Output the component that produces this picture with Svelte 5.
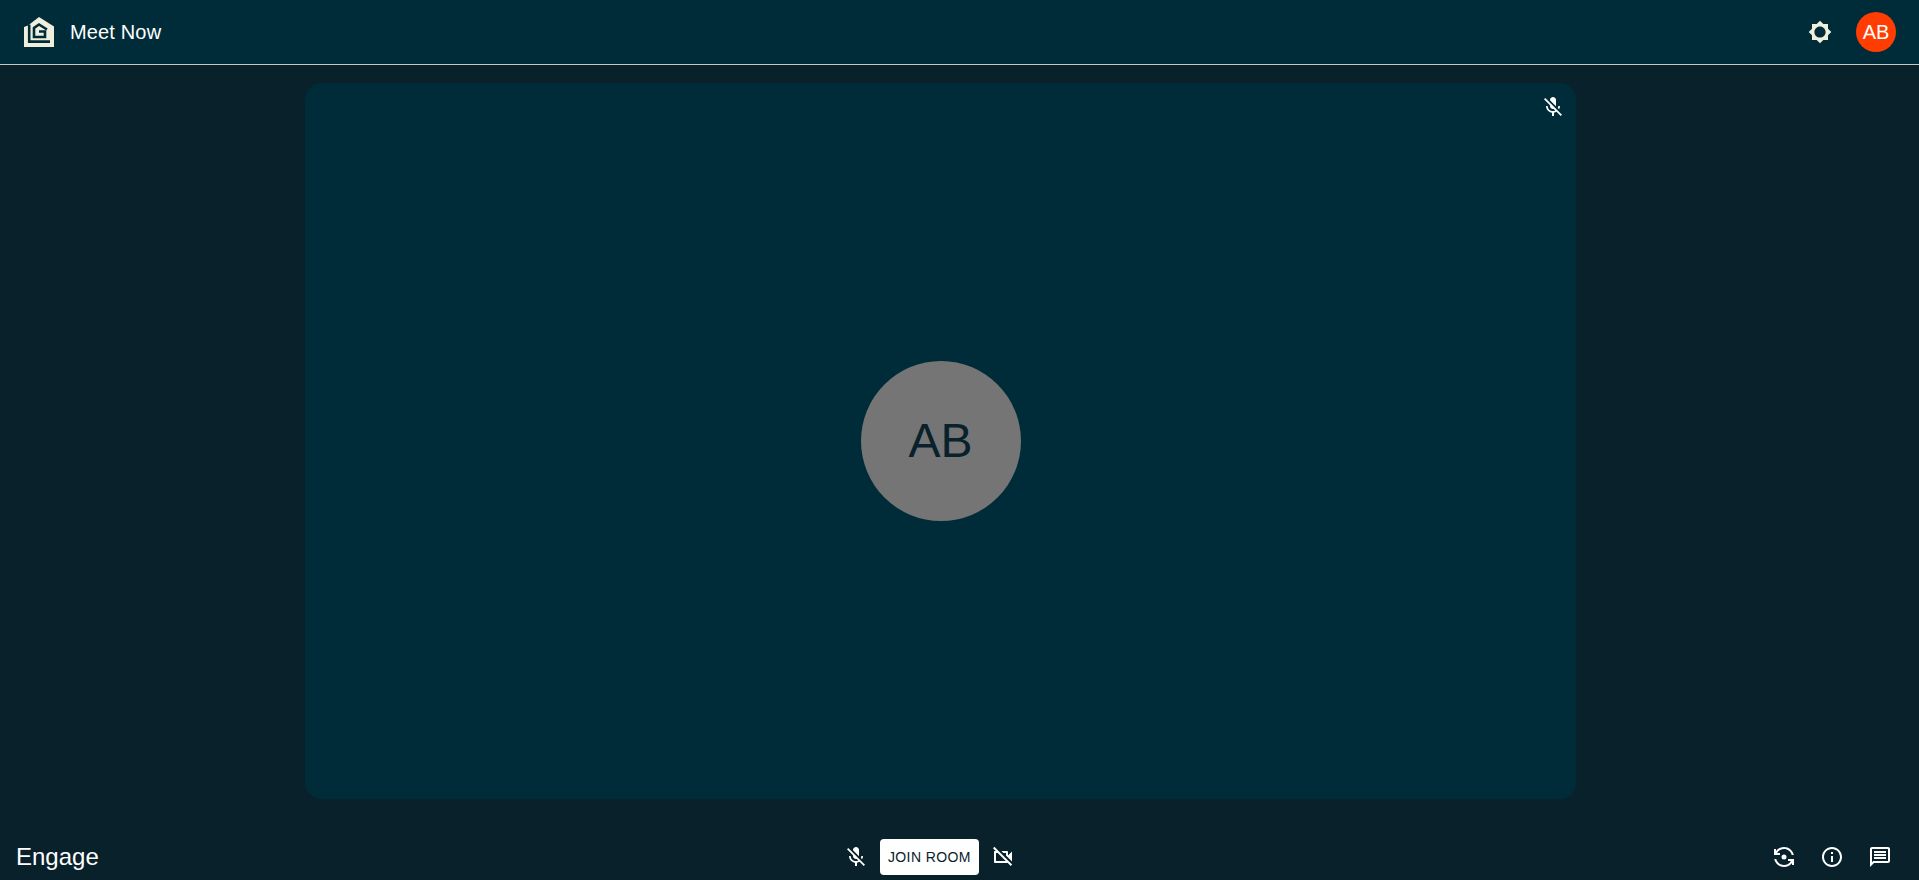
<script>
  const icons = {
    micOff: 'M19 11h-1.7c0 .74-.16 1.43-.43 2.05l1.23 1.23c.56-.98.9-2.09.9-3.28zm-4.02.17c0-.06.02-.11.02-.17V5c0-1.66-1.34-3-3-3s-3 1.34-3 3v.18l5.98 5.99zM4.27 3L3 4.27l6.01 6.01V11c0 1.66 1.33 3 2.99 3 .22 0 .44-.03.65-.08l1.66 1.66c-.71.33-1.5.52-2.31.52-2.76 0-5.3-2.1-5.3-5.1H5c0 3.41 2.72 6.23 6 6.72V21h2v-3.28c.91-.13 1.77-.45 2.54-.9L19.73 21 21 19.73 4.27 3z',
    videoOff: 'M9.56 8l-2-2-4.15-4.14L2 3.27 4.73 6H4c-.55 0-1 .45-1 1v10c0 .55.45 1 1 1h12c.21 0 .39-.08.55-.18L19.73 21l1.41-1.41-8.86-8.86L9.56 8zM5 16V8h1.73l8 8H5zm10-8v2.61l6 6V6.5l-4 4V7c0-.55-.45-1-1-1h-5.61l2 2H15z',
    flip: 'M9.5 12a2.5 2.5 0 1 0 5 0a2.5 2.5 0 1 0-5 0zM8 10V8H5.09C6.47 5.61 9.05 4 12 4c3.72 0 6.85 2.56 7.74 6h2.06c-.93-4.56-4.96-8-9.8-8C8.73 2 5.82 3.58 4 6.01V4H2v6h6zm8 4v2h2.91c-1.38 2.39-3.96 4-6.91 4-3.72 0-6.85-2.56-7.74-6H2.2c.92 4.56 4.95 8 9.8 8 3.27 0 6.18-1.58 8-4.01V20h2v-6h-6z',
    info: 'M11 7h2v2h-2zm0 4h2v6h-2zm1-9C6.48 2 2 6.48 2 12s4.48 10 10 10 10-4.48 10-10S17.52 2 12 2zm0 18c-4.41 0-8-3.59-8-8s3.59-8 8-8 8 3.59 8 8-3.59 8-8 8z',
    chat: 'M20 2H4c-1.1 0-1.99.9-1.99 2L2 22l4-4h14c1.1 0 2-.9 2-2V4c0-1.1-.9-2-2-2zm0 14H5.17L4 17.17V4h16v12zM6 12h12v2H6zm0-3h12v2H6zm0-3h12v2H6z',
    brightness: 'M20 15.31L23.31 12 20 8.69V4h-4.69L12 .69 8.69 4H4v4.69L.69 12 4 15.31V20h4.69L12 23.31 15.31 20H20v-4.69zM12 17.6c-3.09 0-5.6-2.51-5.6-5.6s2.51-5.6 5.6-5.6 5.6 2.51 5.6 5.6-2.51 5.6-5.6 5.6z'
  };
</script>

<div class="page">
  <header class="topbar">
    <div class="brand">
      <svg class="logo" viewBox="0 0 30 30" width="30" height="30">
        <path d="M0 10L4 8.5 15 0 30 9.5V30H0z" fill="#efefdc"/>
        <g fill="none" stroke="#002c3a" stroke-width="2.6">
          <path d="M5.2 7.5V24.6H26"/>
          <path d="M23 12.5L15 7.5 10 11V20H21V14.5H15"/>
        </g>
      </svg>
      <span class="title">Meet Now</span>
    </div>
    <div class="actions">
      <svg class="icon cream" viewBox="0 0 24 24"><path d={icons.brightness}/></svg>
      <div class="avatar-small">AB</div>
    </div>
  </header>

  <main class="stage">
    <section class="tile">
      <svg class="icon tile-mic" viewBox="0 0 24 24"><path d={icons.micOff}/></svg>
      <div class="avatar-large">AB</div>
    </section>
  </main>

  <footer class="toolbar">
    <div class="room-name">Engage</div>
    <div class="controls">
      <span class="icon-btn"><svg class="icon" viewBox="0 0 24 24"><path d={icons.micOff}/></svg></span>
      <button class="join">JOIN ROOM</button>
      <span class="icon-btn"><svg class="icon" viewBox="0 0 24 24"><path d={icons.videoOff}/></svg></span>
    </div>
    <div class="controls">
      <span class="icon-btn"><svg class="icon" viewBox="0 0 24 24"><path d={icons.flip}/></svg></span>
      <span class="icon-btn"><svg class="icon" viewBox="0 0 24 24"><path d={icons.info}/></svg></span>
      <span class="icon-btn"><svg class="icon" viewBox="0 0 24 24"><path d={icons.chat}/></svg></span>
    </div>
  </footer>
</div>

<style>
  :global(body) {
    margin: 0;
    background: #08212b;
    font-family: "Liberation Sans", Arial, sans-serif;
  }

  .page {
    height: 880px;
    display: flex;
    flex-direction: column;
    background: #08212b;
    color: #fff;
    overflow: hidden;
  }

  .topbar {
    height: 64px;
    flex: none;
    display: flex;
    align-items: center;
    justify-content: space-between;
    padding: 0 23px 0 24px;
    background: #002c3a;
    border-bottom: 1px solid #c8c8c0;
  }

  .brand {
    display: flex;
    align-items: center;
    gap: 16px;
  }

  .logo {
    display: block;
  }

  .title {
    font-size: 20px;
    letter-spacing: 0.15px;
  }

  .actions {
    display: flex;
    align-items: center;
    gap: 24px;
  }

  .icon {
    width: 24px;
    height: 24px;
    fill: #fff;
    display: block;
  }

  .cream {
    fill: #efefdc;
  }

  .avatar-small {
    width: 40px;
    height: 40px;
    border-radius: 50%;
    background: #ff3d00;
    display: flex;
    align-items: center;
    justify-content: center;
    font-size: 20px;
    line-height: 1;
  }

  .stage {
    flex: 1;
    display: flex;
    justify-content: center;
    padding: 18px 38px 0 0;
    min-height: 0;
  }

  .tile {
    position: relative;
    width: 1271px;
    height: 716px;
    border-radius: 16px;
    background: #002c3a;
    display: flex;
    align-items: center;
    justify-content: center;
  }

  .tile-mic {
    position: absolute;
    top: 12px;
    right: 11px;
  }

  .avatar-large {
    width: 160px;
    height: 160px;
    border-radius: 50%;
    background: #757575;
    color: #08212b;
    display: flex;
    align-items: center;
    justify-content: center;
    font-size: 48px;
    line-height: 1;
    flex: none;
  }

  .toolbar {
    height: 36px;
    flex: none;
    margin-bottom: 5px;
    padding: 0 15px 0 16px;
    display: flex;
    justify-content: space-between;
    align-items: center;
  }

  .room-name {
    font-size: 24px;
  }

  .controls {
    display: flex;
    align-items: center;
  }

  .icon-btn {
    width: 48px;
    height: 36px;
    display: flex;
    align-items: center;
    justify-content: center;
  }

  .join {
    height: 36px;
    padding: 0 8px;
    border: none;
    border-radius: 4px;
    background: #fff;
    color: #08212b;
    font-family: inherit;
    font-size: 14px;
    letter-spacing: 0.4px;
  }
</style>
